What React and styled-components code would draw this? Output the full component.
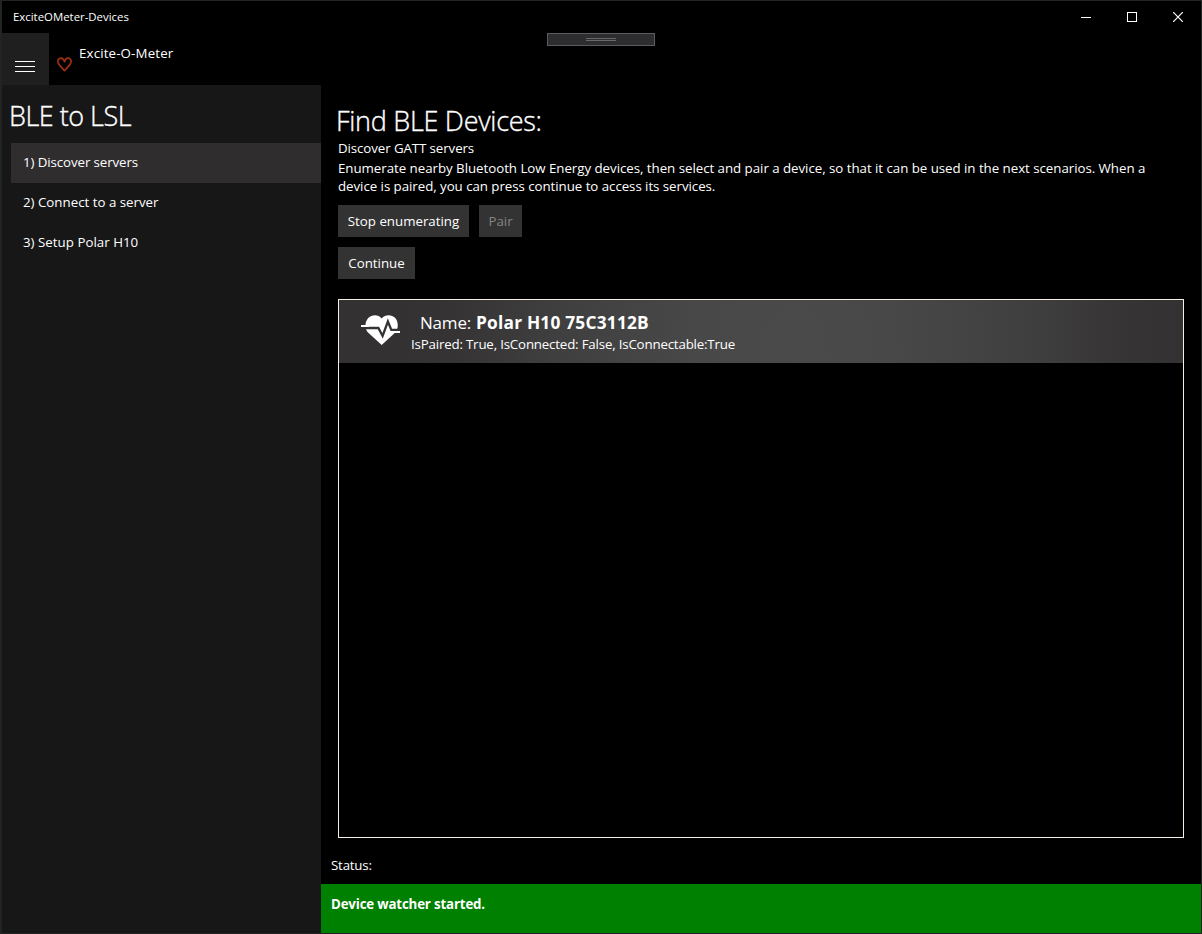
import React from "react";
import styled, { createGlobalStyle } from "styled-components";

const GlobalStyle = createGlobalStyle`
  * { box-sizing: border-box; }
  body { margin: 0; background: #000; overflow: hidden; }
`;

const Window = styled.div`
  position: relative;
  width: 1202px;
  height: 934px;
  display: flex;
  flex-direction: column;
  border: 1px solid #222323;
  border-left-width: 2px;
  background: #000;
  color: #fff;
  font-family: "Open Sans", "Noto Sans", sans-serif;
  font-size: 13.3px;
  white-space: nowrap;
`;

const Label = styled.span`
  display: block;
  font-size: ${(p) => p.$size || 13.3}px;
  font-weight: ${(p) => p.$weight || 400};
  line-height: ${(p) => p.$line || 18}px;
  letter-spacing: ${(p) => p.$track || 0}px;
`;

const Heading = styled.h1`
  margin: 0;
  font-size: 27px;
  font-weight: 300;
  line-height: 37px;
  letter-spacing: ${(p) => p.$track}px;
  -webkit-text-stroke: 0.35px #fff;
`;

const TitleBar = styled.header`
  height: 32px;
  flex: none;
  display: flex;
  justify-content: space-between;
  padding: 6px 0 0 11px;
`;

const WindowControls = styled.div`
  display: flex;
  margin-top: -6px;
`;

const ControlButton = styled.div`
  width: 46px;
  height: 32px;
  display: flex;
  align-items: center;
  justify-content: center;
`;

const AppBar = styled.div`
  height: 52px;
  flex: none;
  display: flex;
`;

const MenuButton = styled.div`
  width: 47px;
  height: 52px;
  padding: 28px 0 0 13px;
  display: flex;
  flex-direction: column;
  gap: 4px;
  background: #1f1f1f;
`;

const MenuLine = styled.div`
  width: 20px;
  height: 1px;
  background: #fff;
`;

const Brand = styled.div`
  display: flex;
  padding: 11px 0 0 8px;
  gap: 7px;
  svg { margin-top: 13px; }
`;

const DebugHandle = styled.div`
  position: absolute;
  left: 545px;
  top: 32px;
  width: 108px;
  height: 13px;
  border: 1px solid #5c5c60;
  background: #2d2d30;
  display: flex;
  flex-direction: column;
  align-items: center;
  padding-top: 4px;
  gap: 1px;
`;

const Grip = styled.div`
  width: 30px;
  height: 1px;
  background: #68686c;
`;

const Body = styled.div`
  flex: 1;
  display: flex;
  min-height: 0;
`;

const Sidebar = styled.nav`
  width: 319px;
  background: #171717;
  padding: 12px 0 0 9px;
`;

const SidebarTitle = styled.div`
  height: 46px;
  margin-left: -2px;
`;

const NavItem = styled.div`
  height: 40px;
  padding: 10px 12px;
  background: ${(p) => (p.$selected ? "#302d2f" : "transparent")};
`;

const Content = styled.main`
  flex: 1;
  display: flex;
  flex-direction: column;
`;

const Page = styled.section`
  flex: 1;
  display: flex;
  flex-direction: column;
  padding: 17px 17px 0;
`;

const PageTitle = styled.div`
  height: 37px;
  margin-left: -2px;
`;

const Description = styled.div`
  padding-top: 2px;
`;

const ButtonRow = styled.div`
  display: flex;
  gap: 10px;
  margin-top: 10px;
`;

const Button = styled.button`
  width: ${(p) => p.$width}px;
  height: 32px;
  padding: 0;
  border: 0;
  display: flex;
  align-items: center;
  justify-content: center;
  background: #333;
  color: #fff;
  font-family: inherit;
  &:disabled { color: #858585; }
`;

const DeviceList = styled.div`
  height: 539px;
  margin-top: 20px;
  border: 1px solid #f5efe6;
`;

const DeviceRow = styled.div`
  height: 63px;
  display: flex;
  padding: 12px 0 0 22px;
  gap: 10px;
  background: radial-gradient(ellipse 400px 700px at 455px 63px, #4b4a4b 0%, #494849 25%, #403f40 60%, #353334 85%, #333132 100%);
  svg { margin-top: 3px; }
`;

const DeviceName = styled.div`
  display: flex;
  gap: 5px;
  padding-left: 9px;
  height: 22px;
`;

const StatusLabel = styled.div`
  height: 46px;
  padding: 18px 0 0 10px;
`;

const StatusBar = styled.footer`
  height: 49px;
  padding: 11px 10px;
  background: #008000;
`;

const HeartOutline = () => (
  <svg width="15" height="15" viewBox="0 0 15 15" fill="none" stroke="#9c2f10" strokeWidth="1.7" strokeLinejoin="round">
    <path d="M7.5 4.500C6.4 1.600 4.600 1 3.400 1.200C1.400 1.600.6 3.600 1 5.300C1.800 8.300 5.200 11 7.500 13.600C9.800 11 13.200 8.300 14 5.300C14.400 3.600 13.600 1.600 11.600 1.200C9.900 1 8 2 7.500 5.400" />
  </svg>
);

const HeartPulse = () => (
  <svg width="40" height="32" viewBox="0 0 40 32">
    <path fill="#fff" d="M20.7 30L6.500 17C3.500 13 3.800 6.500 7.500 2.800C11-.6 17.500-.6 20.700 3.500C24-.6 30.500-.6 34 2.800C37.600 6.500 37.500 13 34.800 17Z" />
    <path fill="none" stroke="#353334" strokeWidth="2.300" d="M2 13H17.400L21.600 21L26.900 6.500L30.300 14.900H39" />
    <path fill="none" stroke="#fff" strokeWidth="1.800" d="M0 11H8M30 17H39" />
  </svg>
);

const nav = [
  { text: "1) Discover servers", selected: true, track: -0.09 },
  { text: "2) Connect to a server" },
  { text: "3) Setup Polar H10", track: 0.02 },
];

export default function App() {
  return (
    <>
      <GlobalStyle />
      <Window>
        <TitleBar>
          <Label $size={11.4} $line={20}>ExciteOMeter-Devices</Label>
          <WindowControls>
            <ControlButton>
              <svg width="10" height="10" shapeRendering="crispEdges"><path d="M0 5.5H10" stroke="#fff" /></svg>
            </ControlButton>
            <ControlButton>
              <svg width="10" height="10" shapeRendering="crispEdges"><rect x=".5" y=".5" width="9" height="9" fill="none" stroke="#fff" /></svg>
            </ControlButton>
            <ControlButton>
              <svg width="10" height="10"><path d="M0 0L10 10M10 0L0 10" stroke="#fff" strokeWidth="1.2" /></svg>
            </ControlButton>
          </WindowControls>
        </TitleBar>
        <AppBar>
          <MenuButton><MenuLine /><MenuLine /><MenuLine /></MenuButton>
          <Brand>
            <HeartOutline />
            <Label $track={0.15}>Excite-O-Meter</Label>
          </Brand>
        </AppBar>
        <Body>
          <Sidebar>
            <SidebarTitle><Heading $track={-0.5}>BLE to LSL</Heading></SidebarTitle>
            {nav.map((n) => (
              <NavItem key={n.text} $selected={n.selected}><Label $track={n.track}>{n.text}</Label></NavItem>
            ))}
          </Sidebar>
          <Content>
            <Page>
              <PageTitle><Heading $track={-0.28}>Find BLE Devices:</Heading></PageTitle>
              <Label $track={-0.09}>Discover GATT servers</Label>
              <Description>
                <Label $track={-0.034}>Enumerate nearby Bluetooth Low Energy devices, then select and pair a device, so that it can be used in the next scenarios. When a</Label>
                <Label $track={-0.045}>device is paired, you can press continue to access its services.</Label>
              </Description>
              <ButtonRow>
                <Button $width={131}><Label>Stop enumerating</Label></Button>
                <Button $width={43} disabled><Label>Pair</Label></Button>
              </ButtonRow>
              <ButtonRow>
                <Button $width={77}><Label>Continue</Label></Button>
              </ButtonRow>
              <DeviceList>
                <DeviceRow>
                  <HeartPulse />
                  <div>
                    <DeviceName>
                      <Label $size={17} $line={22} $track={-0.2}>Name:</Label>
                      <Label $size={17.3} $line={22} $weight={700} $track={0.22}>Polar H10 75C3112B</Label>
                    </DeviceName>
                    <Label $line={20} $track={-0.18}>IsPaired: True, IsConnected: False, IsConnectable:True</Label>
                  </div>
                </DeviceRow>
              </DeviceList>
            </Page>
            <StatusLabel><Label $track={-0.2}>Status:</Label></StatusLabel>
            <StatusBar><Label $weight={700} $track={-0.17}>Device watcher started.</Label></StatusBar>
          </Content>
        </Body>
        <DebugHandle><Grip /><Grip /></DebugHandle>
      </Window>
    </>
  );
}
